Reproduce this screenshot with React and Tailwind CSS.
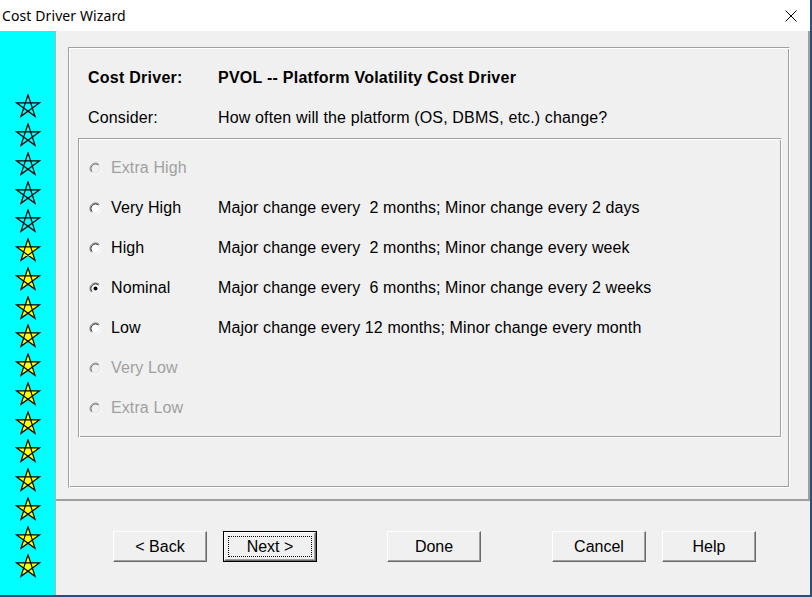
import React from 'react';

const OPTIONS = [
  { label: 'Extra High', desc: '', disabled: true },
  { label: 'Very High', desc: 'Major change every  2 months; Minor change every 2 days' },
  { label: 'High', desc: 'Major change every  2 months; Minor change every week' },
  { label: 'Nominal', desc: 'Major change every  6 months; Minor change every 2 weeks', checked: true },
  { label: 'Low', desc: 'Major change every 12 months; Minor change every month' },
  { label: 'Very Low', desc: '', disabled: true },
  { label: 'Extra Low', desc: '', disabled: true },
];

// 5 empty stars on top, the rest filled
const STARS = Array.from({ length: 17 }, (_, i) => i >= 5);

function Star({ filled }) {
  return (
    <svg width="26" height="24" viewBox="0 0 26 24">
      <polygon
        points="13,0.8 20.05,22.3 1.6,8.9 24.4,8.9 5.95,22.3"
        fill={filled ? '#ffff00' : 'none'}
        stroke="#000"
        strokeWidth="1.2"
        strokeLinejoin="miter"
      />
    </svg>
  );
}

function Radio({ checked, disabled }) {
  return (
    <svg width="13" height="13" viewBox="0 0 13 13" className="shrink-0">
      <circle cx="6.5" cy="6.5" r="5.5" fill={disabled ? '#f0f0f0' : '#fff'} />
      <path d="M2.61 10.39 A5.5 5.5 0 0 1 10.39 2.61" fill="none" stroke={disabled ? '#a0a0a0' : '#6e6e6e'} />
      <path d="M10.39 2.61 A5.5 5.5 0 0 1 2.61 10.39" fill="none" stroke="#fff" />
      <path d="M3.32 9.68 A4.5 4.5 0 0 1 9.68 3.32" fill="none" stroke={disabled ? '#696969' : '#303030'} />
      <path d="M9.68 3.32 A4.5 4.5 0 0 1 3.32 9.68" fill="none" stroke="#e3e3e3" />
      {checked && <circle cx="6.5" cy="6.5" r="2" fill="#000" />}
    </svg>
  );
}

function Button({ children, isDefault, className = '' }) {
  if (isDefault) {
    return (
      <div className={`w-[94px] h-[31px] border border-black ${className}`}>
        <div className="relative w-full h-full flex items-center justify-center border border-t-white border-l-white border-r-[#696969] border-b-[#696969] shadow-[inset_-1px_-1px_0_#a0a0a0] text-[16px]">
          {children}
          <span className="absolute inset-x-[3px] inset-y-[3px] border border-dotted border-black" />
        </div>
      </div>
    );
  }
  return (
    <div
      className={`w-[94px] h-[31px] flex items-center justify-center border border-t-white border-l-white border-r-[#696969] border-b-[#696969] shadow-[inset_-1px_-1px_0_#a0a0a0] text-[16px] ${className}`}
    >
      {children}
    </div>
  );
}

export default function App() {
  return (
    <div className="w-[812px] h-[597px] flex flex-col bg-[#f0f0f0] border-r-2 border-b-2 border-[#2b4f76] font-['Liberation_Sans',Arial,sans-serif] text-black overflow-hidden">
      {/* title bar */}
      <div className="h-[31px] shrink-0 bg-white flex items-center justify-between">
        <span className="pl-[2px] text-[14px] tracking-[0.1px] font-['Noto_Sans',sans-serif]">Cost Driver Wizard</span>
        <svg width="12" height="12" viewBox="0 0 12 12" className="mr-[13px]">
          <path d="M0.5 0.5 L11.5 11.5 M11.5 0.5 L0.5 11.5" stroke="#000" strokeWidth="1" />
        </svg>
      </div>

      <div className="flex flex-1 min-h-0">
        {/* star rating strip */}
        <div className="w-[55px] shrink-0 bg-[#00ffff] flex flex-col items-center pt-[61px]">
          {STARS.map((filled, i) => (
            <div key={i} className="h-[28.75px] flex items-center justify-center">
              <Star filled={filled} />
            </div>
          ))}
        </div>

        <div className="flex-1 flex flex-col border-l border-[#b4b4b4] shadow-[inset_1px_0_0_#fff]">
          <div className="h-[470px] shrink-0 border-b-2 border-r-2 border-[#a0a0a0] pl-[12px] pt-[16px]">
            <div className="w-[722px] h-[441px] border border-t-[#a0a0a0] border-l-[#a0a0a0] border-r-white border-b-white shadow-[inset_1px_1px_0_#fff,inset_-1px_-1px_0_#a0a0a0]">
              <div className="pl-[19px] pt-[10px] tracking-[0.2px]">
                <div className="h-[40px] flex items-center text-[16px] font-bold tracking-[0.25px]">
                  <span className="w-[130px]">Cost Driver:</span>
                  <span>PVOL -- Platform Volatility Cost Driver</span>
                </div>
                <div className="h-[39px] flex items-center text-[16px] tracking-[0.15px]">
                  <span className="w-[130px]">Consider:</span>
                  <span>How often will the platform (OS, DBMS, etc.) change?</span>
                </div>
              </div>

              <div className="ml-[9px] mt-[1px] w-[704px] h-[300px] border border-t-[#a0a0a0] border-l-[#a0a0a0] border-r-white border-b-white shadow-[inset_1px_1px_0_#fff,inset_-1px_-1px_0_#a0a0a0] pt-[9px] tracking-[0.1px]">
                {OPTIONS.map((o) => (
                  <div key={o.label} className="h-[40px] flex items-center pl-[10px] text-[16px]">
                    <Radio checked={o.checked} disabled={o.disabled} />
                    <span className={`ml-[9px] w-[107px] ${o.disabled ? 'text-[#a0a0a0]' : ''}`}>{o.label}</span>
                    <span className="whitespace-pre">{o.desc}</span>
                  </div>
                ))}
              </div>
            </div>
          </div>

          {/* buttons */}
          <div className="flex items-start pt-[30px] pl-[57px]">
            <Button>&lt; Back</Button>
            <Button isDefault className="ml-[16px]">Next &gt;</Button>
            <Button className="ml-[70px]">Done</Button>
            <Button className="ml-[71px]">Cancel</Button>
            <Button className="ml-[16px]">Help</Button>
          </div>
        </div>
      </div>
    </div>
  );
}
